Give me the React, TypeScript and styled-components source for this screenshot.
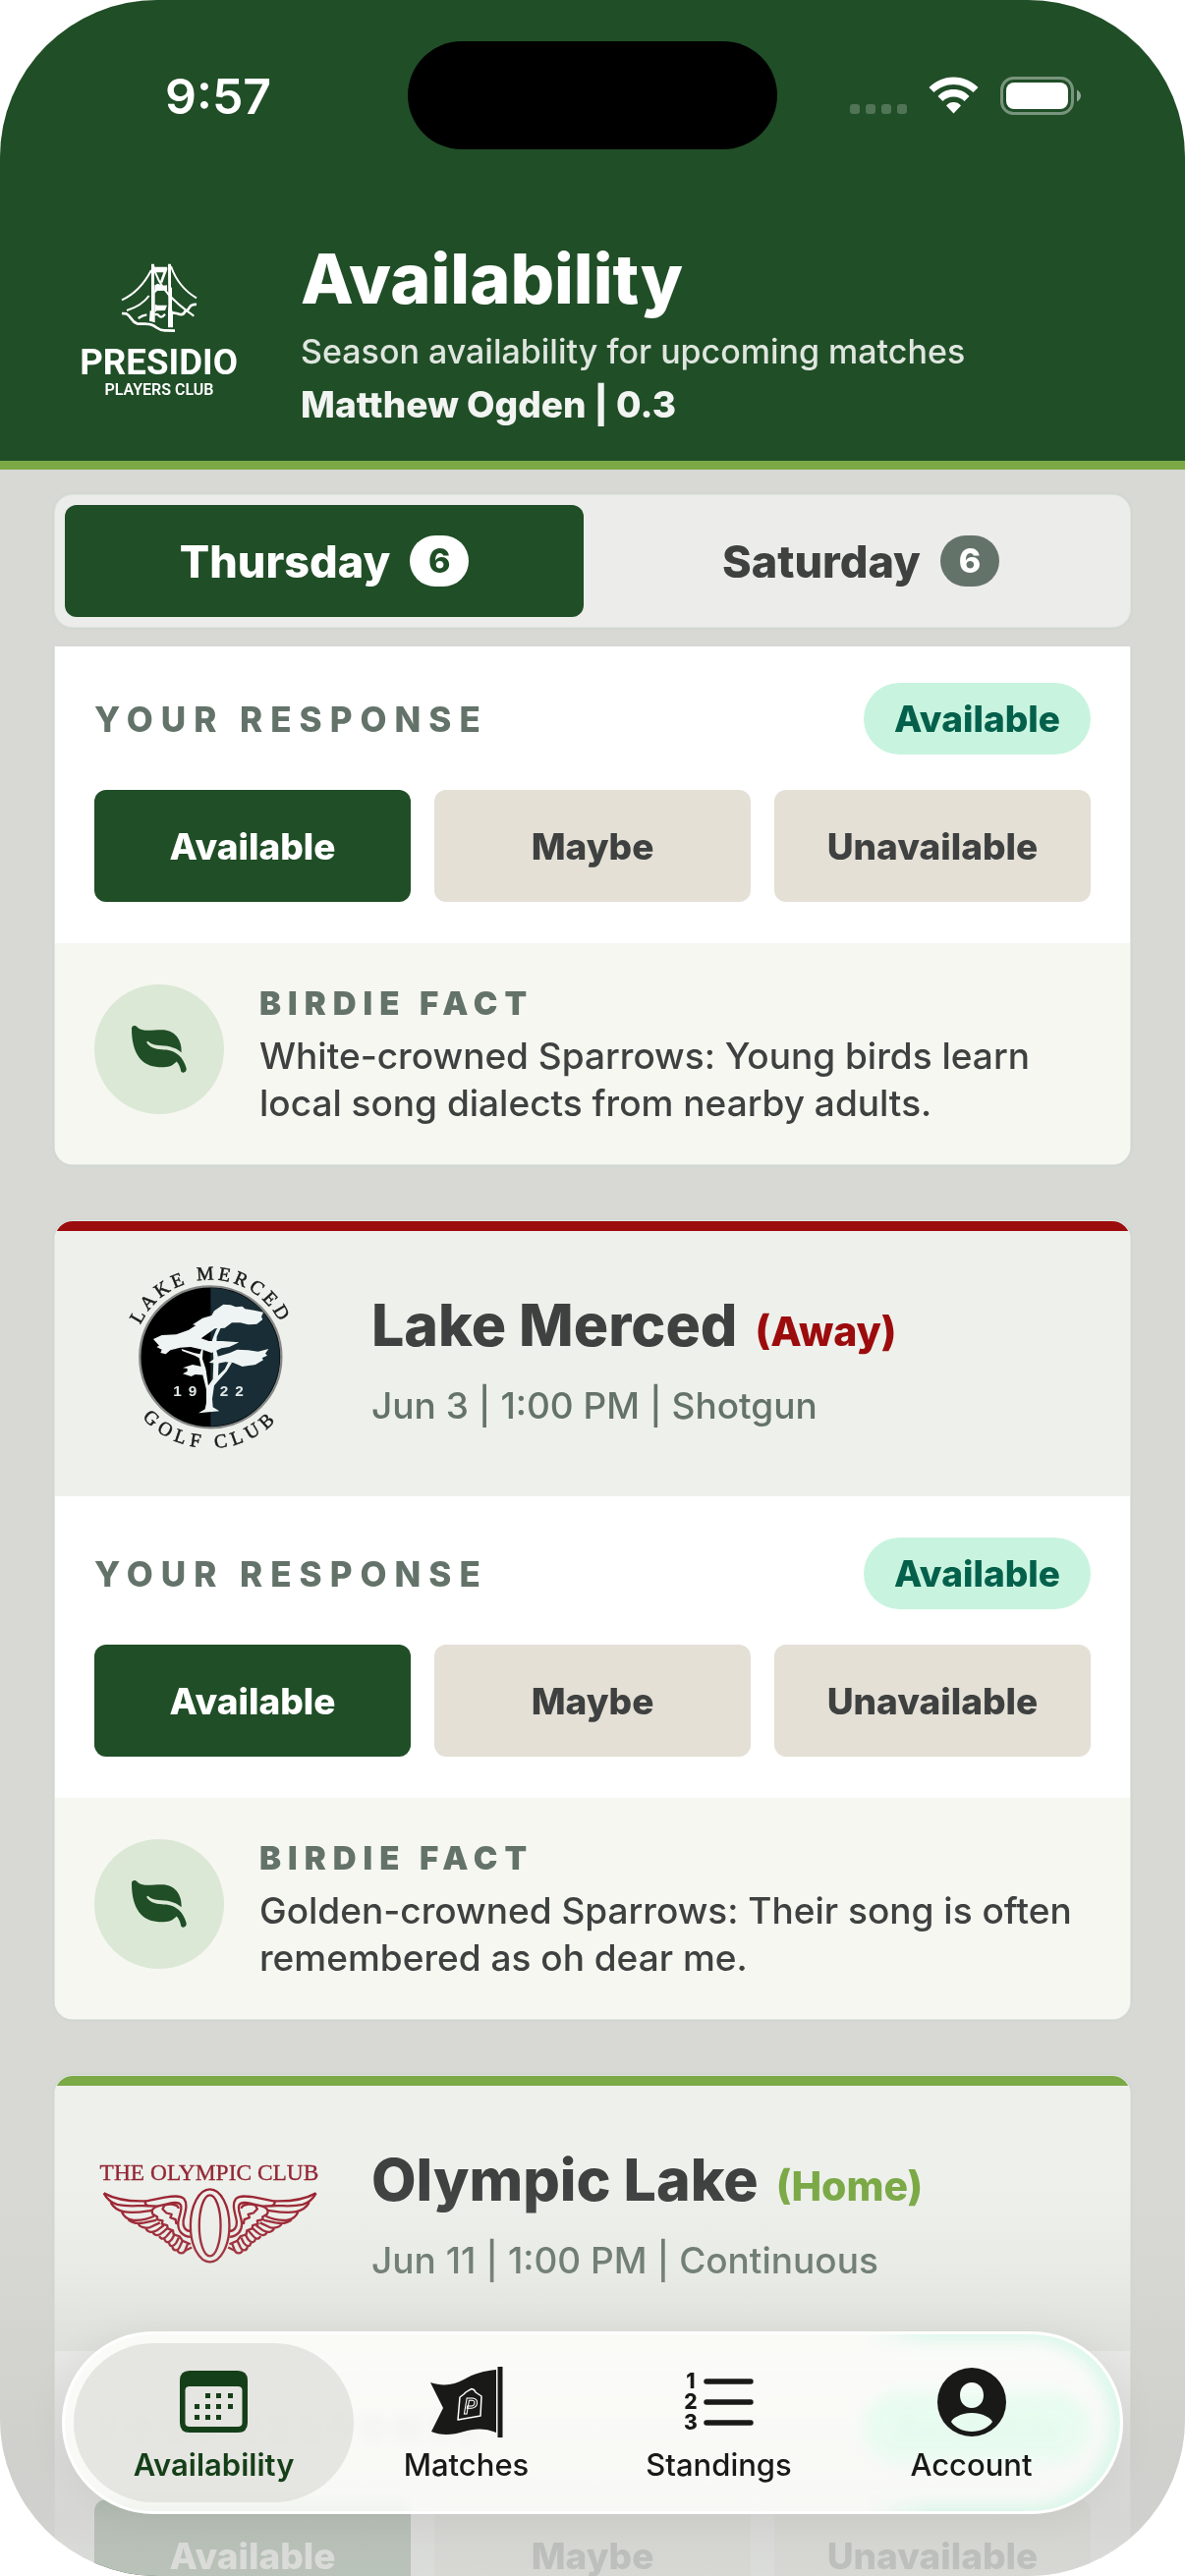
import React, { useState } from "react";
import styled, { createGlobalStyle } from "styled-components";

const color = {
  forest: "#204e27",
  lime: "#7ba946",
  red: "#9c0c0d",
  page: "#d8d9d5",
  ink: "#3e4140",
  sage: "#64736a",
  sand: "#e4e0d6",
};

const edge = "0 0 0 1px #dfe4de, 0 0 0 3px #d2d8d1";

const Global = createGlobalStyle`
  *, *::before, *::after { box-sizing: border-box; }
  html, body { margin: 0; background: #fff; }
  body { font-family: Inter, "Liberation Sans", sans-serif; color: ${color.ink}; }
  h1, h2, h3, p { margin: 0; }
  button { font: inherit; border: 0; cursor: pointer; }
  svg { overflow: visible; }
`;

const Screen = styled.div`
  position: relative;
  display: flex;
  flex-direction: column;
  height: 100vh;
  overflow: hidden;
  border-radius: 160px;
  background: ${color.page};
`;

const StatusBar = styled.div`
  display: grid;
  grid-template-columns: 1fr 376px 1fr;
  align-items: center;
  padding: 42px 106px 0;
  color: #fff;
`;

const Clock = styled.time`
  justify-self: start;
  margin: 2px 0 0 62px;
  font-size: 50px;
  line-height: 60px;
  font-weight: 600;
`;

const Island = styled.div`
  height: 110px;
  border-radius: 55px;
  background: #000;
`;

const StatusIcons = styled.svg`
  justify-self: end;
  display: block;
  width: 236px;
  height: 40px;
`;

const Top = styled.header`
  flex: none;
  border-bottom: 9px solid ${color.lime};
  background: ${color.forest};
`;

const Brand = styled.div`
  display: flex;
  align-items: center;
  gap: 64px;
  padding: 90px 82px 33px;
  color: #fff;
`;

const ClubMark = styled.svg`
  flex: none;
  display: block;
  width: 160px;
  height: 142px;
`;

const Title = styled.h1`
  margin-bottom: 8px;
  font-size: 70px;
  line-height: 84px;
  font-weight: 800;
`;

const Subtitle = styled.p`
  margin-bottom: 6px;
  font-size: 34px;
  line-height: 48px;
  font-weight: 500;
  color: #dfe6df;
`;

const Player = styled.p`
  font-size: 37px;
  line-height: 48px;
  font-weight: 800;
  color: #f2f4f2;
`;

const DaySwitch = styled.div`
  flex: none;
  display: grid;
  grid-template-columns: 1fr 1fr;
  gap: 18px;
  margin: 26px 56px 20px;
  padding: 10px;
  border-radius: 18px;
  background: #ececea;
  box-shadow: ${edge};
`;

const DayButton = styled.button<{ $active: boolean }>`
  display: flex;
  align-items: center;
  justify-content: center;
  gap: 20px;
  height: 114px;
  padding: 0;
  border-radius: 12px;
  background: ${(p) => (p.$active ? color.forest : "transparent")};
  color: ${(p) => (p.$active ? "#fff" : color.ink)};
  font-size: 45px;
  font-weight: 800;
`;

const Count = styled.span<{ $active: boolean }>`
  width: 60px;
  border-radius: 26px;
  background: ${(p) => (p.$active ? "#fff" : color.sage)};
  color: ${(p) => (p.$active ? color.forest : "#fff")};
  font-size: 34px;
  line-height: 52px;
  text-align: center;
`;

const Matches = styled.main`
  flex: 1;
  min-height: 0;
  display: flex;
  flex-direction: column;
  gap: 58px;
  padding: 0 56px;
  overflow: hidden;
`;

const Card = styled.article<{ $scrolled?: boolean }>`
  flex: none;
  border-radius: ${(p) => (p.$scrolled ? "0 0 18px 18px" : "18px")};
  background: #fff;
  box-shadow: ${edge};
  overflow: hidden;
`;

const CardHead = styled.header<{ $accent: string }>`
  display: flex;
  align-items: center;
  gap: 48px;
  padding: 36px 40px 48px;
  border-top: 10px solid ${(p) => p.$accent};
  background: #eef0eb;
`;

const Crest = styled.div`
  flex: none;
  display: flex;
  align-items: center;
  justify-content: center;
  width: 234px;
  height: 186px;
`;

const Opponent = styled.h2`
  display: flex;
  align-items: baseline;
  gap: 18px;
  margin-bottom: 22px;
  font-size: 59px;
  line-height: 76px;
  font-weight: 800;
`;

const Venue = styled.span<{ $accent: string }>`
  font-size: 41px;
  line-height: 48px;
  color: ${(p) => p.$accent};
`;

const Meta = styled.p`
  font-size: 37px;
  line-height: 44px;
  font-weight: 500;
  color: ${color.sage};
`;

const Response = styled.section<{ $scrolled?: boolean }>`
  padding: ${(p) => (p.$scrolled ? "37px" : "42px")} 40px 42px;
`;

const ResponseHead = styled.div`
  display: flex;
  align-items: center;
  justify-content: space-between;
  margin-bottom: 36px;
`;

const Eyebrow = styled.h3`
  font-size: 35px;
  line-height: 44px;
  font-weight: 800;
  letter-spacing: 8px;
  color: ${color.sage};
`;

const Status = styled.span`
  padding: 0 31px;
  border-radius: 37px;
  background: #c8f4df;
  color: #04604b;
  font-size: 37px;
  line-height: 73px;
  font-weight: 800;
`;

const Choices = styled.div`
  display: grid;
  grid-template-columns: repeat(3, 1fr);
  gap: 24px;
`;

const Choice = styled.button<{ $active: boolean }>`
  height: 114px;
  padding: 0;
  border-radius: 12px;
  background: ${(p) => (p.$active ? color.forest : color.sand)};
  color: ${(p) => (p.$active ? "#fff" : color.ink)};
  font-size: 37px;
  font-weight: 800;
`;

const Fact = styled.section`
  display: flex;
  align-items: flex-start;
  gap: 36px;
  padding: 42px 40px 38px;
  background: #f6f7f1;
`;

const FactIcon = styled.span`
  flex: none;
  display: grid;
  place-items: center;
  width: 132px;
  height: 132px;
  border-radius: 50%;
  background: #dbe8d6;
`;

const FactLabel = styled.h3`
  margin-bottom: 10px;
  font-size: 33px;
  line-height: 39px;
  font-weight: 900;
  letter-spacing: 7px;
  color: ${color.sage};
`;

const FactText = styled.p`
  font-size: 37px;
  line-height: 48px;
  font-weight: 500;
`;

const BottomFade = styled.div`
  position: absolute;
  inset: auto 0 0 0;
  height: 400px;
  pointer-events: none;
  background: linear-gradient(
    rgba(205, 206, 202, 0),
    rgba(205, 206, 202, 0.15) 22%,
    rgba(205, 206, 202, 0.48) 43%,
    rgba(205, 206, 202, 0.78) 72%,
    rgba(207, 208, 205, 0.85) 86%,
    rgba(213, 215, 211, 0.85)
  );
`;

const TabBar = styled.nav`
  position: absolute;
  left: 63px;
  right: 63px;
  bottom: 63px;
  display: grid;
  grid-template-columns: repeat(4, 1fr);
  padding: 9px 23px;
  border: 3px solid #fff;
  border-radius: 93px;
  background: rgba(254, 254, 252, 0.86);
  backdrop-filter: blur(6px) saturate(2);
  box-shadow: 0 0 40px rgba(0, 0, 0, 0.05);

  &::before {
    content: "";
    position: absolute;
    inset: 0;
    border-radius: 90px;
    box-shadow: inset -4px 0 16px 6px rgba(205, 246, 230, 0.7);
    mask-image: linear-gradient(90deg, transparent 76%, #000 82%);
    pointer-events: none;
  }

  &::after {
    content: "";
    position: absolute;
    top: 59px;
    right: 30px;
    width: 231px;
    height: 73px;
    border-radius: 37px;
    background: rgba(214, 255, 236, 0.4);
    filter: blur(8px);
    pointer-events: none;
  }
`;

const Tab = styled.button<{ $active: boolean }>`
  position: relative;
  z-index: 1;
  display: flex;
  flex-direction: column;
  align-items: center;
  gap: 10px;
  height: 162px;
  margin: 0 -14px;
  padding: 24px 0 0;
  border-radius: 81px;
  background: ${(p) => (p.$active ? "rgba(222, 222, 217, 0.75)" : "transparent")};
  color: ${(p) => (p.$active ? "#153f18" : "#191a17")};
  font-size: 31px;
  line-height: 36px;
  font-weight: ${(p) => (p.$active ? 600 : 500)};

  svg {
    display: block;
    height: 72px;
  }
`;

const PresidioLogo = () => (
  <ClubMark viewBox="66 55 480 426" role="img" aria-label="Presidio Players Club">
    <g fill="#fff">
      <path d="M282 57h9v72l2 8v99l-17-5 2-31h4z" />
      <path d="M333 57h9v70l3 4v65l3 8v47h-15v-50l1-20z" />
      <path d="M291 66h40l-5 17h-30z" />
      <path d="M292 122l10-5 14 6 14-1v16l-30 1-8 8z" />
      <path d="M293 180q6 4 12 3h25l-6 16-26 1-5 5z" />
    </g>
    <g fill="none" stroke="#fff" strokeWidth="6">
      <path d="M282 76C262 114 230 150 192 167" />
      <path d="M275 154C258 178 236 190 207 199" />
      <path d="M342 64C358 110 384 140 420 161" />
      <path d="M288 62C304 130 350 172 412 216" />
      <path d="M328 70L312 114" strokeWidth="8" />
      <path d="M242 223q12-9 26-11M292 212q8-4 14 4t18-6" strokeWidth="7" />
      <path d="M347 206q14 1 22 5 12 2 15-8l8-4 10-14q8-6 18-4" strokeWidth="8" />
      <path d="M192 208l14 1c16 8 14 24 32 30 14 3 34-3 48 5 16 8 20 18 40 16l28 1" strokeWidth="8" />
    </g>
    <g fill="#fff" fontFamily="Roboto, sans-serif" textAnchor="middle">
      <text x="305" y="393" fontSize="110" fontWeight="700">
        PRESIDIO
      </text>
      <text x="306" y="458" fontSize="48" fontWeight="600">
        PLAYERS CLUB
      </text>
    </g>
  </ClubMark>
);

const LakeMercedLogo = () => (
  <svg width="162" height="185" viewBox="66 57 486 555" role="img" aria-label="Lake Merced Golf Club">
    <defs>
      <path id="lm-top" d="M77 331a236 236 0 0 1 472 0" />
      <path id="lm-bottom" d="M35 331a278 278 0 0 0 556 0" />
    </defs>
    <circle cx="313" cy="331" r="216" fill="#000" stroke="#858887" strokeWidth="7" />
    <path d="M313 120a211 211 0 0 1 0 422z" fill="#182d35" />
    <g fill="#eef4f3">
      <path d="M138 276l26-12 44-2 38-14 22-14-10-2 30-20 28-8 8-14 28-20 22 2 16 6 20-2 8 8 28 4 28 6-6 14 4 8-18 14-26 2-24-6-26 0-22 16-30 2-20 14-22 16 24 8 40 0 52 4-30 14-24 4-30 14-28-10-36-8-32 2-30 8-14 12-16-4 4-10-16-8 8-4z" />
      <path d="M308 348l24-18 40-12 22-10 34 2 30 4 32-8-10 14 6 6-16 8 4 6-24 14-40 6-28-12-24-2-22 4z" />
      <path d="M228 382l14-8 0-8-14-2 30-10 28 6 14 16-4 10-30-2-12 6z" />
      <path d="M276 502l20-12 4-20v-40l-10-40-8-40-4-16-14-8-38-14-2-6 38 12 18 4 6-16 4 2-2 28 10 30 8 52 14-20 2-60-4-60 12-30 14-16 2 6-14 30-2 40 8 30-2 50 20-20 12-24 10 4-16 26-38 44-6 40 2 26 20 12z" />
    </g>
    <g fill="#dfe6e6" fontFamily="'Liberation Sans', Arial, sans-serif" fontWeight="700" fontSize="46">
      <text x="199" y="451">1</text>
      <text x="245" y="451">9</text>
      <text x="341" y="451">2</text>
      <text x="388" y="451">2</text>
    </g>
    <g fill="#1a1c1c" fontFamily="'Liberation Serif', serif" fontSize="59" textAnchor="middle" stroke="#1a1c1c" strokeWidth="1.500">
      <text letterSpacing="11">
        <textPath href="#lm-top" startOffset="50%">LAKE MERCED</textPath>
      </text>
      <text letterSpacing="16">
        <textPath href="#lm-bottom" startOffset="50%">GOLF CLUB</textPath>
      </text>
    </g>
  </svg>
);

const Wing = () => (
  <g>
    <path d="M342 290C318 288 302 272 304 246C306 224 318 206 312 192C306 180 288 184 270 188L240 195M342 272C324 272 318 256 320 240C324 216 336 190 322 172C310 160 285 164 262 168L206 179C160 181 110 174 75 155" />
    <path d="M75 155C84 172 96 184 116 190C150 198 180 192 210 194C200 186 200 182 206 179" />
    <path d="M96 184C104 198 116 208 136 212C166 218 196 212 224 208M130 212C136 226 148 236 164 238C190 240 208 236 230 226" />
    <path d="M150 236C160 246 176 250 200 246L236 238M180 248C186 260 200 264 218 260L248 246M204 263C210 276 224 278 238 270L260 254M226 276C234 288 246 286 256 276L272 262" />
    <path d="M246 287C252 300 262 296 270 286L284 270M262 297C266 310 276 308 284 298L294 280M276 308C278 322 290 320 298 308L306 292M286 319C288 334 302 334 308 322L318 300M302 331C306 344 322 342 326 330L334 310" />
    <path d="M210 194L240 195C226 200 220 208 226 220L240 228 238 236 256 240 254 250 270 254 272 264 288 270 290 282 308 288 318 302 342 312M326 332L346 322" />
    <path d="M262 192L256 204 268 216 284 220 280 230 296 236 298 248 304 246M262 192C276 188 300 186 306 202" />
  </g>
);

const OlympicLogo = () => (
  <svg width="222" height="103" viewBox="66 60 668 312" role="img" aria-label="The Olympic Club">
    <text x="400" y="115" fontFamily="'Liberation Serif', serif" fontSize="71" textAnchor="middle" fill="#932634" stroke="#932634">
      THE OLYMPIC CLUB
    </text>
    <g fill="none" stroke="#9b2230" strokeWidth="7" strokeLinejoin="round">
      <ellipse cx="402" cy="255" rx="60" ry="112" />
      <ellipse cx="402" cy="255" rx="33" ry="94" />
      <Wing />
      <g transform="translate(804 0) scale(-1 1)">
        <Wing />
      </g>
    </g>
  </svg>
);

const LeafIcon = () => (
  <svg width="56" height="48" viewBox="348 275 146 125" aria-hidden="true">
    <path
      fill={color.forest}
      d="M348 283C348 274 358 272 364 280C380 292 400 286 428 286C462 286 482 312 480 346C462 330 440 328 420 327C405 326 397 322 391 316C387 316 387 321 392 325C405 338 425 338 440 339C465 342 485 358 493 388C495 398 484 403 479 396C477 386 474 376 467 370C455 384 440 386 420 385C375 383 348 350 348 283Z"
    />
  </svg>
);

const CalendarIcon = () => (
  <svg width="69" viewBox="0 -4 69 72" aria-hidden="true">
    <path
      fill="currentColor"
      fillRule="evenodd"
      d="M10 0H59Q69 0 69 10V53Q69 63 59 63H10Q0 63 0 53V10Q0 0 10 0ZM10 16Q5.500 16 5.500 20V53Q5.500 57 10 57H59Q63.500 57 63.500 53V20Q63.500 16 59 16Z"
    />
    <path
      fill="currentColor"
      d="M26 23h5v5h-5zM37 23h5v5h-5zM49 23h5v5h-5zM15 34h5v5h-5zM26 34h5v5h-5zM37 34h5v5h-5zM49 34h5v5h-5zM15 45h5v5h-5zM26 45h5v5h-5zM37 45h5v5h-5z"
    />
  </svg>
);

const FlagIcon = () => (
  <svg width="74" viewBox="0 0 74 72" aria-hidden="true">
    <path fill="currentColor" d="M0 16C12 20 24 19 34 13C44 7 55 4 67 3V67C55 62 44 63 34 66C22 70 10 70 1 66L13 42Z" />
    <path fill="currentColor" d="M68.500 0h5v72h-5z" />
    <path fill="none" stroke="#fff" strokeWidth="1.500" strokeLinejoin="round" d="M28 54L30 31L34 28L36 26Q39 24 42 22.500Q45 23 46 26L52 30L51 50Z" />
    <text x="34" y="48" fontSize="22" fill="none" stroke="#fff" strokeWidth="1" fontFamily="Roboto, sans-serif" fontStyle="italic">
      P
    </text>
  </svg>
);

const ListIcon = () => (
  <svg width="70" viewBox="0 -6 70 72" aria-hidden="true">
    <g fill="currentColor" fontFamily="Inter, sans-serif" fontSize="21" fontWeight="800" textAnchor="middle">
      <text x="6" y="16">1</text>
      <text x="6" y="37">2</text>
      <text x="6" y="58">3</text>
    </g>
    <path d="M22 9H67M22 30H67M22 51H67" stroke="currentColor" strokeWidth="5.500" strokeLinecap="round" />
  </svg>
);

const AccountIcon = () => (
  <svg width="70" viewBox="0 -1 70 72" aria-hidden="true">
    <path
      fill="currentColor"
      fillRule="evenodd"
      d="M35 0A35 35 0 1 1 35 70A35 35 0 1 1 35 0ZM35 15C28 15 23 20.500 23 28C23 35.500 28 41 35 41C42 41 47 35.500 47 28C47 20.500 42 15 35 15ZM14 55C18 61 26 65 35 65C44 65 52 61 56 55C55 52 47 46 35 46C23 46 15 52 14 55Z"
    />
  </svg>
);

const CHOICES = ["Available", "Maybe", "Unavailable"];

type ReplyProps = { fact: string; scrolled?: boolean };

const Reply = ({ fact, scrolled }: ReplyProps) => {
  const [answer, setAnswer] = useState("Available");
  return (
    <>
      <Response $scrolled={scrolled}>
        <ResponseHead>
          <Eyebrow>YOUR RESPONSE</Eyebrow>
          <Status>{answer}</Status>
        </ResponseHead>
        <Choices>
          {CHOICES.map((c) => (
            <Choice key={c} type="button" $active={c === answer} aria-pressed={c === answer} onClick={() => setAnswer(c)}>
              {c}
            </Choice>
          ))}
        </Choices>
      </Response>
      {fact && (
        <Fact>
          <FactIcon>
            <LeafIcon />
          </FactIcon>
          <div>
            <FactLabel>BIRDIE FACT</FactLabel>
            <FactText>{fact}</FactText>
          </div>
        </Fact>
      )}
    </>
  );
};

const MATCHES = [
  {
    name: "Lake Merced",
    venue: "(Away)",
    accent: color.red,
    meta: "Jun 3 | 1:00 PM | Shotgun",
    logo: <LakeMercedLogo />,
    fact: "Golden-crowned Sparrows: Their song is often remembered as oh dear me.",
  },
  {
    name: "Olympic Lake",
    venue: "(Home)",
    accent: color.lime,
    meta: "Jun 11 | 1:00 PM | Continuous",
    logo: <OlympicLogo />,
    fact: "",
  },
];

const TABS = [
  { label: "Availability", icon: <CalendarIcon /> },
  { label: "Matches", icon: <FlagIcon /> },
  { label: "Standings", icon: <ListIcon /> },
  { label: "Account", icon: <AccountIcon /> },
];

export default function App() {
  const [day, setDay] = useState("Thursday");
  const [tab, setTab] = useState("Availability");
  return (
    <>
      <Global />
      <Screen>
        <Top>
          <StatusBar>
            <Clock>9:57</Clock>
            <Island />
            <StatusIcons viewBox="0 0 236 40" aria-hidden="true">
              <g fill="#fff" fillOpacity="0.22">
                <rect x="1" y="29" width="10" height="10" rx="3" />
                <rect x="17" y="29" width="10" height="10" rx="3" />
                <rect x="33" y="29" width="10" height="10" rx="3" />
                <rect x="49" y="29" width="10" height="10" rx="3" />
              </g>
              <path
                fill="#fff"
                d="M106.500 1.500C96 1.500 88 6 81.500 12L86.500 17C92 12 99 9 106.500 9C114 9 121 12 126.500 17L131.500 12C125 6 117 1.500 106.500 1.500ZM106.500 14C100 14 94.500 16.500 90.500 21L95.500 26C98.500 23 102 21.500 106.500 21.500C111 21.500 114.500 23 117.500 26L122.500 21C118.500 16.500 113 14 106.500 14ZM106.500 27C103.500 27 101 28 99 30.500L106.500 38.500L114 30.500C112 28 109.500 27 106.500 27Z"
              />
              <rect x="155.500" y="2.500" width="72" height="36" rx="12" fill="none" stroke="#fff" strokeOpacity="0.4" strokeWidth="3" />
              <rect x="160" y="7" width="63" height="27" rx="8" fill="#fff" />
              <path d="M232 14.500Q236 17 236 20.500T232 26.500Z" fill="#fff" fillOpacity="0.5" />
            </StatusIcons>
          </StatusBar>
          <Brand>
            <PresidioLogo />
            <div>
              <Title>Availability</Title>
              <Subtitle>Season availability for upcoming matches</Subtitle>
              <Player>Matthew Ogden | 0.3</Player>
            </div>
          </Brand>
        </Top>
        <DaySwitch>
          {["Thursday", "Saturday"].map((d) => (
            <DayButton key={d} type="button" $active={d === day} aria-pressed={d === day} onClick={() => setDay(d)}>
              {d}
              <Count $active={d === day}>6</Count>
            </DayButton>
          ))}
        </DaySwitch>
        <Matches>
          <Card $scrolled>
            <Reply scrolled fact="White-crowned Sparrows: Young birds learn local song dialects from nearby adults." />
          </Card>
          {MATCHES.map((m) => (
            <Card key={m.name}>
              <CardHead $accent={m.accent}>
                <Crest>{m.logo}</Crest>
                <div>
                  <Opponent>
                    {m.name} <Venue $accent={m.accent}>{m.venue}</Venue>
                  </Opponent>
                  <Meta>{m.meta}</Meta>
                </div>
              </CardHead>
              <Reply fact={m.fact} />
            </Card>
          ))}
        </Matches>
        <BottomFade />
        <TabBar aria-label="Sections">
          {TABS.map((t) => (
            <Tab key={t.label} type="button" $active={t.label === tab} onClick={() => setTab(t.label)}>
              {t.icon}
              {t.label}
            </Tab>
          ))}
        </TabBar>
      </Screen>
    </>
  );
}
